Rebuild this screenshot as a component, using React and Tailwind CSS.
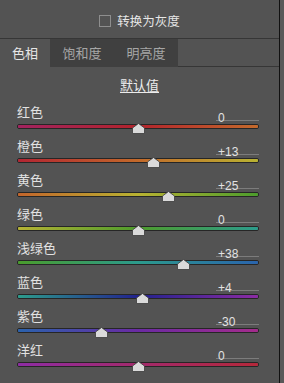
import React from 'react';

const rows = [
  { label: '红色', value: 0, stops: ['#a2235f', '#b3242c', '#c46a2c'] },
  { label: '橙色', value: 13, stops: ['#b22532', '#c2692a', '#b9b232'] },
  { label: '黄色', value: 25, stops: ['#c3652b', '#b8b232', '#4c9c2c'] },
  { label: '绿色', value: 0, stops: ['#b5b234', '#4e9c2c', '#2c9c8c'] },
  { label: '浅绿色', value: 38, stops: ['#4a9c2c', '#2c9a8c', '#2a64ac'] },
  { label: '蓝色', value: 4, stops: ['#2c9c8c', '#22228e', '#8c2ca4'] },
  { label: '紫色', value: -30, stops: ['#2a62ac', '#6a2aa2', '#a42c8c'] },
  { label: '洋红', value: 0, stops: ['#8e2ca4', '#a32a6c', '#b4283a'] },
];

const cjk = { fontFamily: '"Noto Sans CJK SC", "Noto Sans", sans-serif' };
const num = { fontFamily: '"Liberation Sans", Arial, sans-serif' };

function fmt(v) {
  if (v > 0) return `+${v}`;
  return `${v}`;
}

function SliderRow({ label, value, stops }) {
  // track is 242px wide, 0 sits at the middle
  const left = 121 + value * 1.21 - 6.5;
  return (
    <div className="h-[34px] pl-[17px] pr-[20px] flex flex-col">
      <div className="flex h-[21px] pt-[4px]">
        <span className="text-[13px] leading-[16px] text-[#e2e2e2] flex-1" style={cjk}>
          {label}
        </span>
        <div className="w-[43px] border-b border-[#7c7c7c] pl-[2px]">
          <span className="text-[12px] leading-[16px] text-[#e2e2e2]" style={num}>
            {fmt(value)}
          </span>
        </div>
      </div>
      <div className="relative h-[13px] w-[242px]">
        <div className="mt-[3px] h-[5px] rounded-[2px] border border-[#262626] p-0">
          <div
            className="h-[3px] w-full rounded-[1px]"
            style={{ background: `linear-gradient(to right, ${stops[0]}, ${stops[1]}, ${stops[2]})` }}
          />
        </div>
        <svg
          className="absolute top-[2px]"
          style={{ left }}
          width="13"
          height="11"
          viewBox="0 0 13 11"
        >
          <polygon points="0.5,5 6.5,0.5 12.5,5 12.5,10.5 0.5,10.5" fill="#dadada" stroke="#3a3a3a" strokeWidth="0.8" />
        </svg>
      </div>
    </div>
  );
}

export default function App() {
  return (
    <div className="flex w-[284px] h-[383px] bg-[#535353] overflow-hidden">
      <div className="w-[279px] flex flex-col">
        <div className="h-[39px] border-b border-[#363636] flex items-center justify-center pt-[4px] gap-[6px]">
          <div className="w-[12px] h-[12px] border border-[#8e8e8e]" />
          <span className="text-[12.5px] leading-[16px] text-[#e6e6e6]" style={cjk}>
            转换为灰度
          </span>
        </div>
        <div className="h-[28px] flex text-[13px] leading-[16px]" style={cjk}>
          <div className="w-[50px] flex items-center justify-center text-[#e6e6e6]">色相</div>
          <div className="w-[64px] bg-[#404040] flex items-center justify-center text-[#a6a6a6]">饱和度</div>
          <div className="w-[64px] bg-[#404040] flex items-center justify-center text-[#a6a6a6]">明亮度</div>
          <div className="flex-1 border-b border-[#363636]" />
        </div>
        <div className="h-[33px] pt-[10px] flex justify-center">
          <span className="text-[13px] leading-[16px] text-[#ececec] underline underline-offset-[2px]" style={cjk}>
            默认值
          </span>
        </div>
        {rows.map((r) => (
          <SliderRow key={r.label} {...r} />
        ))}
      </div>
      <div className="w-[1px] bg-[#111111]" />
      <div className="flex-1 bg-[#595959]" />
    </div>
  );
}
